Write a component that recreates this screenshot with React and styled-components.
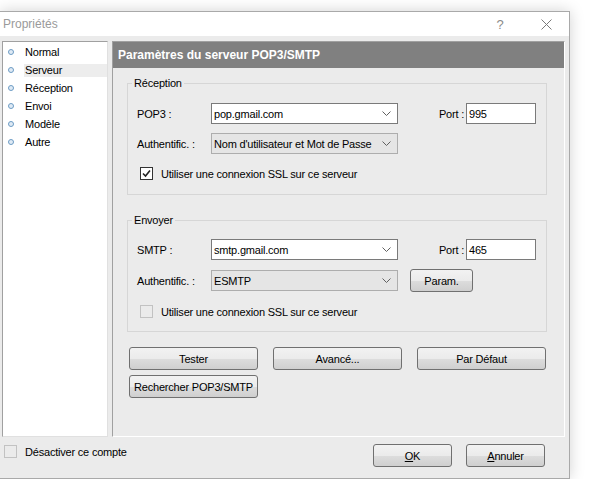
import React from 'react';
import styled, { createGlobalStyle } from 'styled-components';

const GlobalStyle = createGlobalStyle`
	html, body {
		margin: 0;
		padding: 0;
		background: #ffffff;
	}
	body {
		font-family: "Liberation Sans", Arial, sans-serif;
		font-size: 11px;
		letter-spacing: -0.2px;
		color: #000;
	}
`;

const Window = styled.div`
	margin-top: 11px;
	width: 569px;
	height: 466px;
	border: 1px solid #a9a9a9;
	border-left: none;
	background: #ebebeb;
	box-shadow: 0 0 14px rgba(0, 0, 0, 0.18);
	display: flex;
	flex-direction: column;
`;

const TitleBar = styled.div`
	height: 24px;
	background: #fff;
	display: flex;
	align-items: center;
`;

const Title = styled.div`
	flex: 1;
	padding-left: 3px;
	font-size: 12px;
	letter-spacing: 0;
	color: #9a9a9a;
`;

const TitleButton = styled.div`
	width: 46px;
	height: 24px;
	display: flex;
	align-items: center;
	justify-content: center;
	color: #8a8a8a;
	font-size: 13px;
`;

const Body = styled.div`
	display: flex;
	gap: 4px;
	padding: 5px 4px 0 2px;
	height: 396px;
`;

const SideList = styled.ul`
	list-style: none;
	margin: 0;
	padding: 1px 0 0 0;
	width: 104px;
	background: #fff;
	border: 1px solid #a0a0a0;
	border-right-color: #e0e0e0;
	border-bottom-color: #e0e0e0;
`;

const SideItem = styled.li`
	height: 18px;
	display: flex;
	align-items: center;
	padding-left: 5px;
`;

const Bullet = styled.span`
	width: 4px;
	height: 4px;
	border-radius: 50%;
	border: 1px solid #6d9cc4;
	background: #dfeaf5;
	margin-right: 10px;
`;

const ItemText = styled.span`
	flex: 1;
	padding-left: 1px;
	line-height: 13px;
	background: ${(p) => (p.$active ? '#ededed' : 'transparent')};
`;

const Panel = styled.div`
	flex: 1;
	display: flex;
	flex-direction: column;
	border: 1px solid;
	border-color: #a0a0a0 #ffffff #ffffff #a0a0a0;
`;

const PanelHeader = styled.div`
	height: 26px;
	background: #808080;
	color: #fff;
	font-weight: bold;
	font-size: 12px;
	letter-spacing: 0;
	display: flex;
	align-items: center;
	padding-left: 5px;
`;

const PanelContent = styled.div`
	padding: 8px 17px 0 14px;
`;

const Group = styled.fieldset`
	margin: ${(p) => p.$top}px 0 0 0;
	padding: ${(p) => p.$padTop}px 10px ${(p) => p.$padBottom}px 9px;
	border: 1px solid #d6d6d6;
	min-width: 0;
	display: flex;
	flex-direction: column;
	gap: ${(p) => p.$gap}px;
`;

const Legend = styled.legend`
	padding: 0 2px;
	margin-left: -5px;
	line-height: 14px;
`;

const Row = styled.div`
	display: flex;
	align-items: center;
	height: 21px;
`;

const FieldLabel = styled.span`
	width: 74px;
	flex-shrink: 0;
`;

const Combo = styled.div`
	width: 183px;
	height: 19px;
	border: 1px solid ${(p) => (p.$readonly ? '#adadad' : '#7a7a7a')};
	background: ${(p) => (p.$readonly ? '#e5e5e5' : '#fff')};
	display: flex;
	align-items: center;
	padding-left: 2px;
	box-sizing: content-box;
`;

const ComboValue = styled.span`
	flex: 1;
	white-space: nowrap;
`;

const Chevron = styled.span`
	width: 22px;
	display: flex;
	justify-content: center;
`;

const Spacer = styled.div`
	flex: 1;
`;

const PortInput = styled.div`
	width: 66px;
	height: 19px;
	margin-left: 2px;
	border: 1px solid #7a7a7a;
	background: #fff;
	display: flex;
	align-items: center;
	padding-left: 2px;
	box-sizing: content-box;
`;

const CheckRow = styled.div`
	display: flex;
	align-items: center;
	height: 21px;
	padding-left: ${(p) => p.$indent || 0}px;
`;

const Box = styled.span`
	width: 11px;
	height: 11px;
	border: 1px solid ${(p) => (p.$checked ? '#333' : '#c2c2c2')};
	background: ${(p) => (p.$checked ? '#fff' : 'transparent')};
	display: flex;
	align-items: center;
	justify-content: center;
	margin-right: 8px;
`;

const Button = styled.button`
	font: inherit;
	letter-spacing: inherit;
	color: #000;
	width: ${(p) => p.$w}px;
	height: 23px;
	margin-left: ${(p) => p.$ml || 0}px;
	margin-top: ${(p) => p.$mt || 0}px;
	border: 1px solid #707070;
	border-radius: 3px;
	padding: 0;
	background: linear-gradient(#f2f2f2 0%, #ebebeb 50%, #dddddd 51%, #cfcfcf 100%);
	cursor: default;
	flex-shrink: 0;
`;

const ButtonGrid = styled.div`
	display: grid;
	grid-template-columns: repeat(3, 129px);
	column-gap: 15px;
	row-gap: 5px;
	margin: 15px 0 0 2px;
`;

const Footer = styled.div`
	display: flex;
	align-items: flex-start;
	height: 40px;
	padding: 0 24px 0 4px;
`;

const FooterCheck = styled.div`
	margin-top: 4px;
`;

const Accel = styled.span`
	text-decoration: underline;
`;

const ChevronIcon = () => (
	<svg width="9" height="5" viewBox="0 0 9 5">
		<path d="M0.5 0.5 L4.5 4.5 L8.5 0.5" fill="none" stroke="#606060" strokeWidth="1" />
	</svg>
);

const CheckIcon = () => (
	<svg width="9" height="9" viewBox="0 0 9 9">
		<path d="M1 4.5 L3.5 7 L8 1.5" fill="none" stroke="#222" strokeWidth="1.6" />
	</svg>
);

const CloseIcon = () => (
	<svg width="11" height="11" viewBox="0 0 11 11">
		<path d="M0.5 0.5 L10.5 10.5 M10.5 0.5 L0.5 10.5" stroke="#7a7a7a" strokeWidth="1" />
	</svg>
);

const sections = ['Normal', 'Serveur', 'Réception', 'Envoi', 'Modèle', 'Autre'];

const ComboBox = ({ value, readonly }) => (
	<Combo $readonly={readonly}>
		<ComboValue>{value}</ComboValue>
		<Chevron>
			<ChevronIcon />
		</Chevron>
	</Combo>
);

const CheckBox = ({ checked, children, indent }) => (
	<CheckRow $indent={indent}>
		<Box $checked={checked}>{checked && <CheckIcon />}</Box>
		{children}
	</CheckRow>
);

export default function App() {
	return (
		<>
			<GlobalStyle />
			<Window>
				<TitleBar>
					<Title>Propriétés</Title>
					<TitleButton>?</TitleButton>
					<TitleButton>
						<CloseIcon />
					</TitleButton>
				</TitleBar>

				<Body>
					<SideList>
						{sections.map((name) => (
							<SideItem key={name}>
								<Bullet />
								<ItemText $active={name === 'Serveur'}>{name}</ItemText>
							</SideItem>
						))}
					</SideList>

					<Panel>
						<PanelHeader>Paramètres du serveur POP3/SMTP</PanelHeader>
						<PanelContent>
							<Group $top={0} $padTop={13} $padBottom={10} $gap={9}>
								<Legend>Réception</Legend>
								<Row>
									<FieldLabel>POP3 :</FieldLabel>
									<ComboBox value="pop.gmail.com" />
									<Spacer />
									<span>Port :</span>
									<PortInput>995</PortInput>
								</Row>
								<Row>
									<FieldLabel>Authentific. :</FieldLabel>
									<ComboBox value="Nom d'utilisateur et Mot de Passe" readonly />
								</Row>
								<CheckBox checked indent={3}>
									Utiliser une connexion SSL sur ce serveur
								</CheckBox>
							</Group>

							<Group $top={18} $padTop={12} $padBottom={9} $gap={10}>
								<Legend>Envoyer</Legend>
								<Row>
									<FieldLabel>SMTP :</FieldLabel>
									<ComboBox value="smtp.gmail.com" />
									<Spacer />
									<span>Port :</span>
									<PortInput>465</PortInput>
								</Row>
								<Row>
									<FieldLabel>Authentific. :</FieldLabel>
									<ComboBox value="ESMTP" readonly />
									<Button $w={63} $ml={12}>
										Param.
									</Button>
								</Row>
								<CheckBox indent={3}>Utiliser une connexion SSL sur ce serveur</CheckBox>
							</Group>

							<ButtonGrid>
								<Button $w={129}>Tester</Button>
								<Button $w={129}>Avancé...</Button>
								<Button $w={129}>Par Défaut</Button>
								<Button $w={129}>Rechercher POP3/SMTP</Button>
							</ButtonGrid>
						</PanelContent>
					</Panel>
				</Body>

				<Footer>
					<FooterCheck>
						<CheckBox>Désactiver ce compte</CheckBox>
					</FooterCheck>
					<Spacer />
					<Button $w={79} $mt={7}>
						<Accel>O</Accel>K
					</Button>
					<Button $w={79} $ml={14} $mt={7}>
						<Accel>A</Accel>nnuler
					</Button>
				</Footer>
			</Window>
		</>
	);
}
